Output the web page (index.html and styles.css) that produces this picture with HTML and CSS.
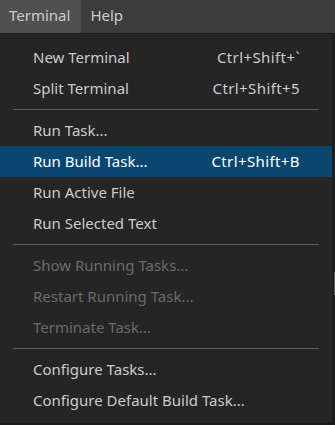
FILE: index.html
```html
<!DOCTYPE html>
<html lang="en">
<head>
    <meta charset="UTF-8">
    <title>Terminal menu</title>
    <link rel="stylesheet" href="styles.css">
</head>
<body>
    <div class="menubar">
        <div class="menubar-item open">Terminal</div>
        <div class="menubar-item">Help</div>
    </div>
    <div class="workbench">
        <!-- Terminal dropdown -->
        <ul class="menu">
            <li class="item"><span class="label">New Terminal</span><span class="keys">Ctrl+Shift+`</span></li>
            <li class="item"><span class="label">Split Terminal</span><span class="keys">Ctrl+Shift+5</span></li>
            <li class="separator"></li>
            <li class="item"><span class="label">Run Task...</span></li>
            <li class="item active"><span class="label">Run Build Task...</span><span class="keys">Ctrl+Shift+B</span></li>
            <li class="item"><span class="label">Run Active File</span></li>
            <li class="item"><span class="label">Run Selected Text</span></li>
            <li class="separator"></li>
            <li class="item disabled"><span class="label">Show Running Tasks...</span></li>
            <li class="item disabled"><span class="label">Restart Running Task...</span></li>
            <li class="item disabled"><span class="label">Terminate Task...</span></li>
            <li class="separator"></li>
            <li class="item"><span class="label">Configure Tasks...</span></li>
            <li class="item"><span class="label">Configure Default Build Task...</span></li>
        </ul>
        <div class="editor-edge">
            <div class="slider"></div>
        </div>
    </div>
</body>
</html>
```

FILE: styles.css
```css
body {
    margin: 0;
    padding: 0;
    background: #1b1b1c;
    font-family: "Noto Sans", "Open Sans", sans-serif;
    font-size: 15px;
    color: #cccccc;
    height: 425px;
    overflow: hidden;
}
.menubar {
    display: flex;
    height: 33px;
    background: #3c3c3c;
}
.menubar-item {
    padding: 0 10px 0 9px;
    line-height: 31px;
    color: #cccccc;
}
.menubar-item.open {
    background: #505050;
    padding-right: 11px;
}
.workbench {
    display: flex;
    align-items: flex-start;
}
.menu {
    list-style: none;
    margin: 0;
    padding: 9px 0 7px 0;
    width: 332px;
    background: #252526;
    box-shadow: 0 1px 0 #1a1a1a inset;
}
.item {
    display: flex;
    height: 31px;
    line-height: 31px;
    padding: 0 32px 0 33px;
    white-space: nowrap;
}
.item .label {
    flex: 1;
}
.item .keys {
    letter-spacing: 0.4px;
}
.item.active {
    background: #094771;
    color: #ffffff;
}
.item.disabled {
    color: #6b6b6b;
}
.separator {
    height: 1px;
    margin: 5px 13px;
    background: #5e5e5e;
}
.editor-edge {
    width: 3px;
    height: 392px;
    background: #1e1e1e;
}
.slider {
    margin-top: 239px;
    margin-left: 2px;
    width: 1px;
    height: 23px;
    background: #5a5a5a;
}
```
